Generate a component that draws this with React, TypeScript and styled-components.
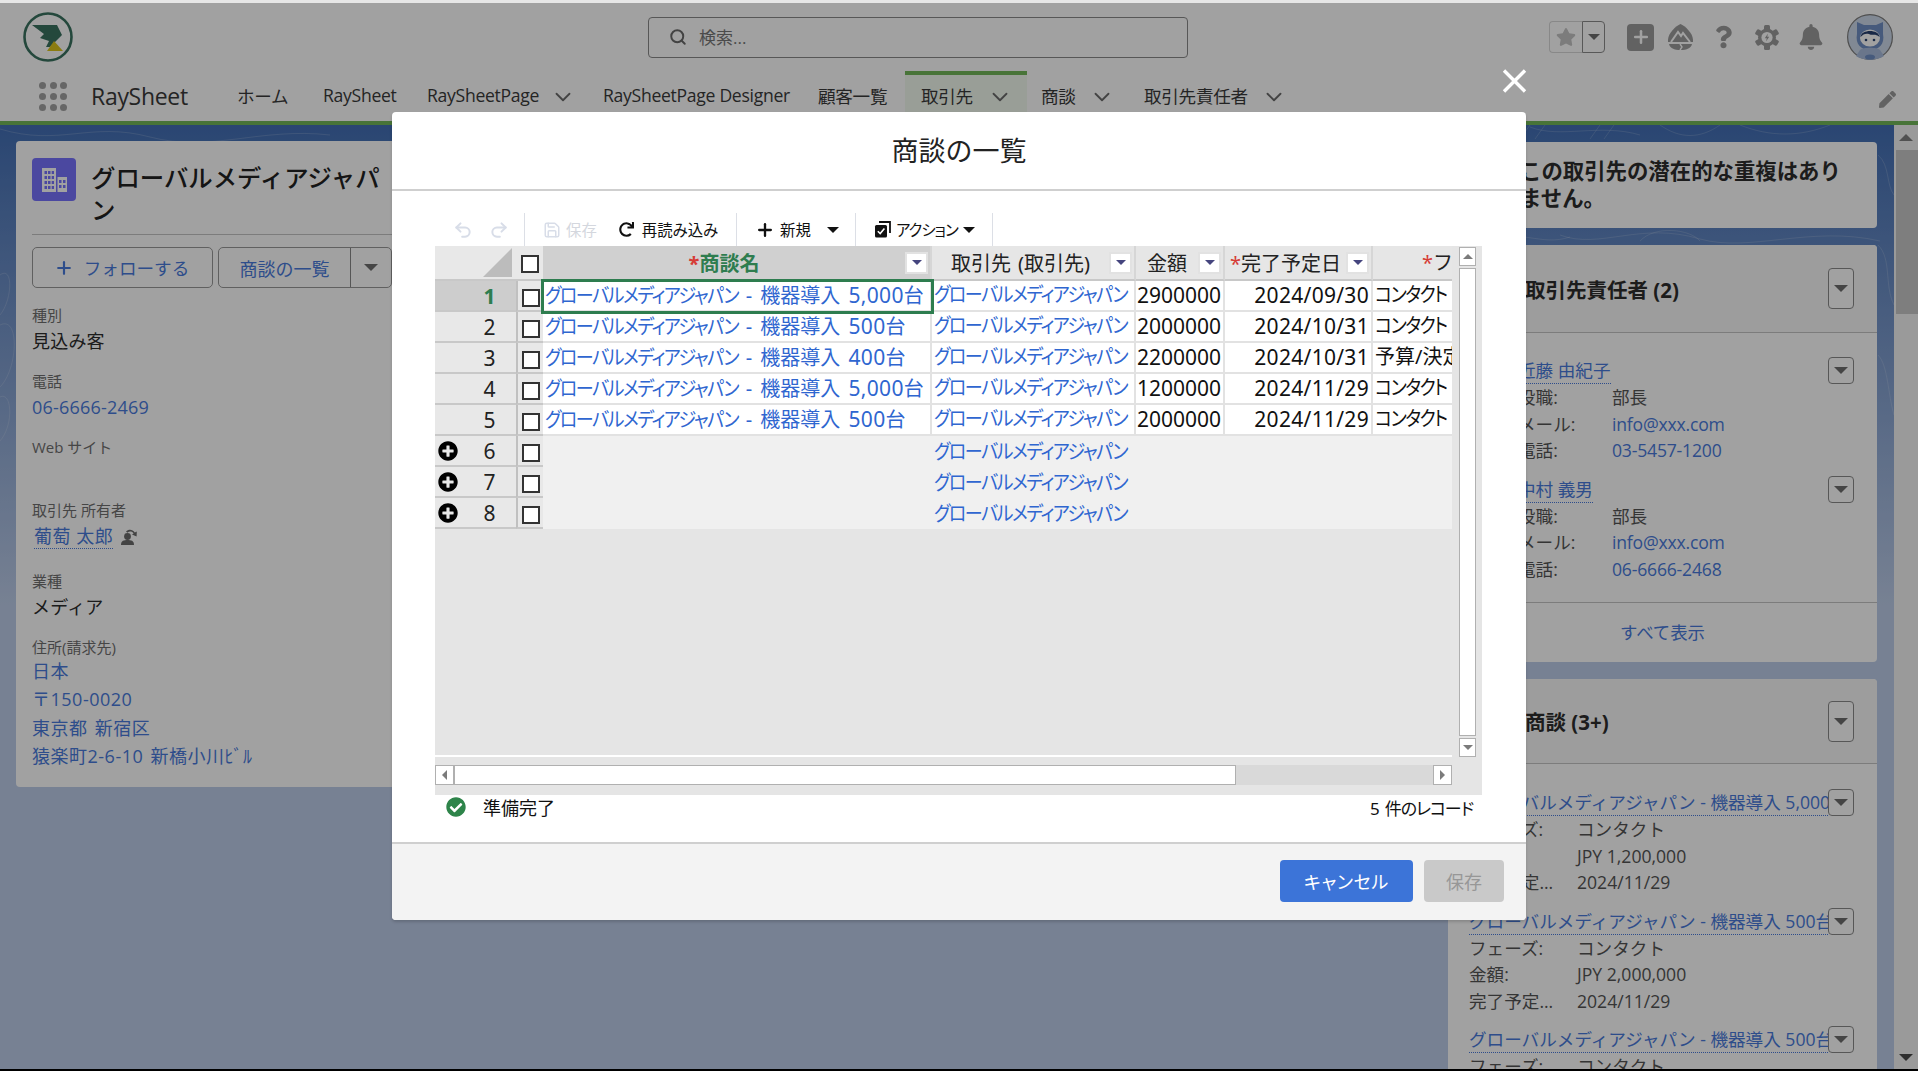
import styled, { createGlobalStyle } from 'styled-components';
import { ChevronDown, Plus, Redo2, Save, Search, Undo2 } from 'lucide-react';
import { FaBell, FaCheckCircle, FaPen, FaPlusCircle, FaQuestion, FaRedo, FaStar } from 'react-icons/fa';

const sans = `"Open Sans", "Noto Sans CJK JP", sans-serif`;
const sheet = `"Noto Sans", "Noto Sans CJK JP", sans-serif`;
const COLUMNS = '81px 27px 389px 204px 89px 148px 80px';

const GlobalStyle = createGlobalStyle`
  html, body { margin: 0; padding: 0; overflow: hidden; }
  body { font-family: ${sans}; color: #2d2d2d; background: #000; }
  * { box-sizing: border-box; }
`;

const Caret = ({ size = 6, color = '#6e6e6e' }: { size?: number; color?: string }) => (
  <CaretShape $size={size} $color={color} />
);

const Logo = () => (
  <svg width="50" height="50" viewBox="0 0 50 50">
    <circle cx="25" cy="25" r="23.5" fill="none" stroke="#3a7260" strokeWidth="2.6" />
    <path d="M9 13 L34 13 L39 23 L27 35 L23 35 L26 29 L17 26 L21 22 Z" fill="#3a7260" />
    <path d="M31 29 L40 39 L24 39 Z" fill="#dcc51c" />
  </svg>
);

const TrailIcon = () => (
  <svg width="25" height="26" viewBox="0 0 25 26">
    <path d="M12.5 0 C17 2 25 9 25 16 L25 18 L0 18 L0 16 C0 9 8 2 12.5 0 Z" fill="#9c9c9c" />
    <path d="M1 20 L24 20 C23 24 19 26 12.5 26 C6 26 2 24 1 20 Z" fill="#9c9c9c" />
    <path d="M3 18 L10 8 L13 12 L15 9 L22 18" fill="none" stroke="#fff" strokeWidth="2" />
    <path d="M12 20 L14 23 L12 26" fill="none" stroke="#fff" strokeWidth="1.4" />
  </svg>
);

const GearIcon = () => (
  <svg width="24" height="25" viewBox="0 0 24 25">
    <g fill="#9c9c9c">
      <circle cx="12" cy="12.5" r="9" />
      <rect x="9" y="0" width="6" height="25" rx="1.5" />
      <rect x="9" y="0" width="6" height="25" rx="1.5" transform="rotate(60 12 12.5)" />
      <rect x="9" y="0" width="6" height="25" rx="1.5" transform="rotate(120 12 12.5)" />
    </g>
    <circle cx="12" cy="12.5" r="5.6" fill="#fff" />
    <path d="M13 8.5 L9.8 13.2 L11.8 13.2 L11 16.5 L14.2 11.8 L12.2 11.8 Z" fill="#9c9c9c" />
  </svg>
);

const Avatar = () => (
  <svg width="46" height="46" viewBox="0 0 46 46">
    <circle cx="23" cy="23" r="22.4" fill="#cdd9ea" stroke="#7d7d7d" strokeWidth="1.2" />
    <path d="M10 8 L17 11 L29 11 L36 8 L36 20 C38 30 32 36 23 36 C14 36 8 30 10 20 Z" fill="#6f8fc4" />
    <path d="M13 36 C16 33 30 33 33 36 L37 42 C30 47 16 47 9 42 Z" fill="#a9bcdc" />
    <ellipse cx="23" cy="24" rx="10" ry="8.6" fill="#fff" />
    <path d="M13.5 23 C14 15 32 15 32.5 23 C28 19 26 22 22 20 C19 19 16 20 13.5 23 Z" fill="#27406f" />
    <circle cx="19" cy="26" r="1.3" fill="#27406f" />
    <circle cx="27" cy="26" r="1.3" fill="#27406f" />
    <ellipse cx="23" cy="43" rx="5" ry="2.6" fill="#6f8fc4" />
  </svg>
);

const BuildingIcon = () => (
  <svg width="26" height="24" viewBox="0 0 26 24" fill="#fff">
    <path d="M1 0 H15 V24 H1 Z M3.5 3 V6 H6 V3 Z M7 3 V6 H9.5 V3 Z M10.7 3 V6 H13 V3 Z M3.5 8 V11 H6 V8 Z M7 8 V11 H9.5 V8 Z M10.7 8 V11 H13 V8 Z M3.5 13 V16 H6 V13 Z M7 13 V16 H9.5 V13 Z M10.7 13 V16 H13 V13 Z M3.5 18 V21 H6 V18 Z M7 18 V21 H9.5 V18 Z M10.7 18 V21 H13 V18 Z" fillRule="evenodd" />
    <path d="M16.5 9 H26 V24 H16.5 Z M18 12 V15 H20.5 V12 Z M22 12 V15 H24.5 V12 Z M18 17 V20 H20.5 V17 Z M22 17 V20 H24.5 V17 Z" fillRule="evenodd" />
  </svg>
);

const OwnerIcon = () => (
  <svg width="17" height="17" viewBox="0 0 17 17" fill="#6a6a6a">
    <circle cx="6.5" cy="8.5" r="3.4" />
    <path d="M0 17 C0 12.5 3 12 6.5 12 C10 12 13 12.5 13 17 Z" />
    <path d="M5 3.6 C7.5 0.8 11.5 1 13.8 4.4 L15.8 3.4 L15.6 8.6 L11 6.4 L12.6 5.4 C11 3.2 8.4 3 6.4 4.8 Z" />
  </svg>
);

const ActionIcon = () => (
  <svg width="17" height="17" viewBox="0 0 17 17">
    <path d="M5 1 H16 V12" fill="none" stroke="#111" strokeWidth="1.8" />
    <rect x="1" y="4" width="12" height="12.5" rx="1.5" fill="#111" />
    <path d="M3.8 10.2 L6.2 12.6 L10.4 7.6" fill="none" stroke="#fff" strokeWidth="1.6" />
  </svg>
);

const CloseIcon = () => (
  <svg width="25" height="24" viewBox="0 0 25 24">
    <path d="M2 1.5 L23 22.5 M23 1.5 L2 22.5" stroke="#fff" strokeWidth="3.4" fill="none" />
  </svg>
);

const Contours = () => (
  <svg width="1894" height="944" viewBox="0 0 1894 944" fill="none" stroke="rgba(255,255,255,0.16)" strokeWidth="1">
    <path d="M0 4 C60 22 90 -4 150 12 C210 28 260 2 330 10" />
    <path d="M0 150 C14 140 12 176 0 190 M0 200 C20 190 18 244 0 262 M0 272 C12 266 14 300 0 316" />
    <path d="M1560 110 C1600 125 1640 96 1700 114 C1750 128 1810 100 1880 116" />
    <path d="M1640 116 C1655 100 1690 104 1700 116 M1490 118 C1520 102 1540 122 1570 112" />
    <path d="M1530 2 C1560 14 1600 -2 1640 10 M1660 0 C1680 14 1700 14 1720 0 M1740 0 C1770 12 1800 12 1830 0" />
    <path d="M1878 30 C1890 40 1886 60 1894 70 M1878 120 C1892 134 1884 160 1894 180 M1878 230 C1888 240 1888 270 1894 290" />
    <path d="M1530 0 L1520 14 M1545 0 L1535 14 M1600 0 L1590 14 M1614 0 L1604 14" />
  </svg>
);

const SHEET_ROWS = [
  { qty: '5,000', amount: '2900000', date: '2024/09/30', phase: 'コンタクト' },
  { qty: '500', amount: '2000000', date: '2024/10/31', phase: 'コンタクト' },
  { qty: '400', amount: '2200000', date: '2024/10/31', phase: '予算/決定' },
  { qty: '5,000', amount: '1200000', date: '2024/11/29', phase: 'コンタクト' },
  { qty: '500', amount: '2000000', date: '2024/11/29', phase: 'コンタクト' },
];

const CONTACTS = [
  { name: '近藤 由紀子', mail: '03-5457-1200' },
  { name: '中村 義男', mail: '06-6666-2468' },
];

const DEALS = [
  { name: 'グローバルメディアジャパン - 機器導入 5,000台', amount: 'JPY 1,200,000', date: '2024/11/29' },
  { name: 'グローバルメディアジャパン - 機器導入 500台', amount: 'JPY 2,000,000', date: '2024/11/29' },
  { name: 'グローバルメディアジャパン - 機器導入 500台', amount: 'JPY 2,000,000', date: '2024/11/29' },
];

const navItems = [
  { label: 'ホーム', width: 86 },
  { label: 'RaySheet', width: 104 },
  { label: 'RaySheetPage', width: 176, chevronGap: 11 },
  { label: 'RaySheetPage Designer', width: 215 },
  { label: '顧客一覧', width: 87 },
  { label: '取引先', width: 122, chevronGap: 14, pad: 16, active: true },
  { label: '商談', width: 117, chevronGap: 13, pad: 14 },
  { label: '取引先責任者', width: 150, chevronGap: 13 },
];

export default function App() {
  return (
    <>
      <GlobalStyle />
      <Root>
        <TopStrip />
        <Shell>
          <TopBar>
            <LogoSlot>
              <Logo />
            </LogoSlot>
            <SearchBox>
              <Search size={18} strokeWidth={2.6} color="#6a6a6a" />
              <span>検索...</span>
            </SearchBox>
            <HeaderActions>
              <FavoriteGroup>
                <FavoriteStar>
                  <FaStar size={20} color="#c4c4c4" />
                </FavoriteStar>
                <FavoriteCaret>
                  <Caret size={6} />
                </FavoriteCaret>
              </FavoriteGroup>
              <AddBox>
                <Plus size={20} strokeWidth={3} color="#fff" />
              </AddBox>
              <HeaderIcon $left={14} $width={25}>
                <TrailIcon />
              </HeaderIcon>
              <HeaderIcon $left={22} $width={17}>
                <FaQuestion size={24} color="#9c9c9c" />
              </HeaderIcon>
              <HeaderIcon $left={23} $width={24}>
                <GearIcon />
              </HeaderIcon>
              <HeaderIcon $left={19} $width={26}>
                <FaBell size={26} color="#9c9c9c" />
              </HeaderIcon>
              <HeaderIcon $left={23} $width={46}>
                <Avatar />
              </HeaderIcon>
            </HeaderActions>
          </TopBar>

          <NavBar>
            <Launcher>
              {Array.from({ length: 9 }).map((_, i) => (
                <Dot key={i} />
              ))}
            </Launcher>
            <AppName>RaySheet</AppName>
            {navItems.map((item) => (
              <NavItem key={item.label} $width={item.width} $pad={item.pad} $active={item.active}>
                <span>{item.label}</span>
                {item.chevronGap && (
                  <NavChevron $gap={item.chevronGap}>
                    <ChevronDown size={26} strokeWidth={1.7} />
                  </NavChevron>
                )}
              </NavItem>
            ))}
            <NavPencil>
              <FaPen size={17} color="#9c9c9c" />
            </NavPencil>
          </NavBar>

          <Body>
            <Main>
              <ContourLayer>
                <Contours />
              </ContourLayer>
              <LeftCard>
                <RecordHead>
                  <RecordIcon>
                    <BuildingIcon />
                  </RecordIcon>
                  <RecordTitle>グローバルメディアジャパン</RecordTitle>
                </RecordHead>
                <ActionRow>
                  <FollowButton>
                    <Plus size={20} strokeWidth={2.6} />
                    <span>フォローする</span>
                  </FollowButton>
                  <SplitButton>
                    <SplitLabel>商談の一覧</SplitLabel>
                    <SplitCaret>
                      <Caret size={7} />
                    </SplitCaret>
                  </SplitButton>
                </ActionRow>
                <Field $after={16}>
                  <FieldLabel>種別</FieldLabel>
                  <FieldValue>見込み客</FieldValue>
                </Field>
                <Field $after={16}>
                  <FieldLabel>電話</FieldLabel>
                  <FieldLink>06-6666-2469</FieldLink>
                </Field>
                <Field $after={17}>
                  <FieldLabel>Web サイト</FieldLabel>
                  <FieldValue />
                </Field>
                <Field $after={21}>
                  <FieldLabel>取引先 所有者</FieldLabel>
                  <OwnerRow>
                    <OwnerLink>葡萄 太郎</OwnerLink>
                    <OwnerIcon />
                  </OwnerRow>
                </Field>
                <Field $after={16}>
                  <FieldLabel>業種</FieldLabel>
                  <FieldValue>メディア</FieldValue>
                </Field>
                <Field $after={0}>
                  <FieldLabel>住所(請求先)</FieldLabel>
                  <AddressLine>日本</AddressLine>
                  <AddressLine>〒150-0020</AddressLine>
                  <AddressLine>東京都 新宿区</AddressLine>
                  <AddressLine>猿楽町2-6-10 新橋小川ﾋﾞﾙ</AddressLine>
                </Field>
              </LeftCard>
              <span />
              <RightColumn>
                <NoticeCard>この取引先の潜在的な重複はありません。</NoticeCard>
                <SideCard>
                  <SideHead $height={88}>
                    <SideTitle>取引先責任者 (2)</SideTitle>
                    <TallMenu>
                      <Caret size={7} />
                    </TallMenu>
                  </SideHead>
                  <SideList $left={70} $top={24} $bottom={8}>
                    {CONTACTS.map((c) => (
                      <RecordItem key={c.name}>
                        <RecordNameRow>
                          <RecordLink>{c.name}</RecordLink>
                          <RowMenu>
                            <Caret size={7} />
                          </RowMenu>
                        </RecordNameRow>
                        <InfoRow $label={94}>
                          <span>役職:</span>
                          <span>部長</span>
                        </InfoRow>
                        <InfoRow $label={94}>
                          <span>メール:</span>
                          <InfoLink>info@xxx.com</InfoLink>
                        </InfoRow>
                        <InfoRow $label={94}>
                          <span>電話:</span>
                          <InfoLink>{c.mail}</InfoLink>
                        </InfoRow>
                      </RecordItem>
                    ))}
                  </SideList>
                  <ShowAll>すべて表示</ShowAll>
                </SideCard>
                <SideCard>
                  <SideHead $height={85}>
                    <SideTitle>商談 (3+)</SideTitle>
                    <TallMenu>
                      <Caret size={7} />
                    </TallMenu>
                  </SideHead>
                  <SideList $left={21} $top={25} $bottom={0}>
                    {DEALS.map((d, i) => (
                      <RecordItem key={i}>
                        <RecordNameRow>
                          <RecordLink>{d.name}</RecordLink>
                          <RowMenu>
                            <Caret size={7} />
                          </RowMenu>
                        </RecordNameRow>
                        <InfoRow $label={108}>
                          <span>フェーズ:</span>
                          <span>コンタクト</span>
                        </InfoRow>
                        <InfoRow $label={108}>
                          <span>金額:</span>
                          <span>{d.amount}</span>
                        </InfoRow>
                        <InfoRow $label={108}>
                          <span>完了予定...</span>
                          <span>{d.date}</span>
                        </InfoRow>
                      </RecordItem>
                    ))}
                  </SideList>
                </SideCard>
              </RightColumn>
            </Main>
            <PageScrollbar>
              <ScrollArrowTop>
                <CaretUp />
              </ScrollArrowTop>
              <ScrollThumb />
              <ScrollArrowBottom>
                <Caret size={7} color="#4a4a4a" />
              </ScrollArrowBottom>
            </PageScrollbar>
          </Body>

          <Backdrop />
          <CloseButton>
            <CloseIcon />
          </CloseButton>

          <Modal>
            <ModalHeader>商談の一覧</ModalHeader>
            <ModalBody>
              <Toolbar>
                <ToolGroup $width={90}>
                  <Undo2 size={20} strokeWidth={2.4} color="#d8dde8" />
                  <Redo2 size={20} strokeWidth={2.4} color="#d8dde8" />
                </ToolGroup>
                <ToolGroup $width={212}>
                  <Save size={18} color="#d8dde8" />
                  <ToolText $disabled>保存</ToolText>
                  <ReloadSlot>
                    <FaRedo size={15} color="#111" />
                  </ReloadSlot>
                  <ToolText>再読み込み</ToolText>
                </ToolGroup>
                <ToolGroup $width={119}>
                  <Plus size={20} strokeWidth={2.8} color="#111" />
                  <ToolText>新規</ToolText>
                  <ToolCaret>
                    <Caret size={6} color="#111" />
                  </ToolCaret>
                </ToolGroup>
                <ToolGroup $width={137}>
                  <ActionIcon />
                  <ActionText>アクション</ActionText>
                  <Caret size={6} color="#111" />
                </ToolGroup>
              </Toolbar>

              <SheetFrame>
                <SheetTop>
                  <SheetTable>
                    <SheetRow $height={35}>
                      <CornerCell>
                        <CornerTriangle />
                      </CornerCell>
                      <HeadCheckCell>
                        <CheckBox />
                      </HeadCheckCell>
                      <ColumnHead $selected>
                        <ColumnLabel $selected>
                          <Required>*</Required>商談名
                        </ColumnLabel>
                        <FilterButton>
                          <Caret size={5} color="#45457e" />
                        </FilterButton>
                      </ColumnHead>
                      <ColumnHead>
                        <ColumnLabel>取引先 (取引先)</ColumnLabel>
                        <FilterButton>
                          <Caret size={5} color="#45457e" />
                        </FilterButton>
                      </ColumnHead>
                      <ColumnHead>
                        <ColumnLabel>金額</ColumnLabel>
                        <FilterButton>
                          <Caret size={5} color="#45457e" />
                        </FilterButton>
                      </ColumnHead>
                      <ColumnHead>
                        <ColumnLabel>
                          <Required>*</Required>完了予定日
                        </ColumnLabel>
                        <FilterButton>
                          <Caret size={5} color="#45457e" />
                        </FilterButton>
                      </ColumnHead>
                      <ClippedHead>
                        <Required>*</Required>フェーズ
                      </ClippedHead>
                    </SheetRow>

                    {SHEET_ROWS.map((r, i) => (
                      <SheetRow key={i} $height={31}>
                        <RowHead $selected={i === 0}>
                          <span />
                          <RowNumber $selected={i === 0}>{i + 1}</RowNumber>
                        </RowHead>
                        <CheckCell>
                          <CheckBox />
                        </CheckCell>
                        <LinkCell $focused={i === 0}>
                          <Kana $trim={22}>グローバルメディアジャパン</Kana> - 機器導入 <Digits>{r.qty}</Digits>台
                        </LinkCell>
                        <LinkCell>
                          <Kana $trim={22}>グローバルメディアジャパン</Kana>
                        </LinkCell>
                        <AmountCell>
                          <Digits>{r.amount}</Digits>
                        </AmountCell>
                        <TextCell $right>
                          <Digits>{r.date}</Digits>
                        </TextCell>
                        <TextCell $last>
                          {r.phase === 'コンタクト' ? <Kana $trim={10}>{r.phase}</Kana> : r.phase}
                        </TextCell>
                      </SheetRow>
                    ))}

                    {[6, 7, 8].map((n) => (
                      <SheetRow key={n} $height={31}>
                        <RowHead>
                          <AddRowIcon>
                            <FaPlusCircle size={20} color="#000" />
                          </AddRowIcon>
                          <RowNumber>{n}</RowNumber>
                        </RowHead>
                        <CheckCell>
                          <CheckBox />
                        </CheckCell>
                        <EmptyCell />
                        <NewLinkCell>
                          <Kana $trim={22}>グローバルメディアジャパン</Kana>
                        </NewLinkCell>
                        <EmptyCell />
                        <EmptyCell />
                        <EmptyCell />
                      </SheetRow>
                    ))}
                  </SheetTable>
                  <VScrollbar>
                    <ScrollButton>
                      <CaretUp $small />
                    </ScrollButton>
                    <VThumb />
                    <ScrollButton>
                      <Caret size={5} color="#7b7b7b" />
                    </ScrollButton>
                  </VScrollbar>
                </SheetTop>
                <HScrollbar>
                  <HButton>
                    <CaretSide $dir="left" />
                  </HButton>
                  <HThumb />
                  <HButton>
                    <CaretSide $dir="right" />
                  </HButton>
                </HScrollbar>
              </SheetFrame>

              <StatusRow>
                <StatusLeft>
                  <FaCheckCircle size={20} color="#2e844a" />
                  <span>準備完了</span>
                </StatusLeft>
                <RecordCount>5 件のレコード</RecordCount>
              </StatusRow>
            </ModalBody>
            <ModalFooter>
              <PrimaryButton>キャンセル</PrimaryButton>
              <DisabledButton>保存</DisabledButton>
            </ModalFooter>
          </Modal>
        </Shell>
        <BottomStrip />
      </Root>
    </>
  );
}

const Root = styled.div`
  width: 1918px;
  height: 1071px;
  display: flex;
  flex-direction: column;
  overflow: hidden;
  background: #000;
`;

const TopStrip = styled.div`
  height: 3px;
  flex: none;
  background: #e6e6e6;
`;

const BottomStrip = styled.div`
  height: 2px;
  flex: none;
  background: #000;
`;

const Shell = styled.div`
  position: relative;
  flex: 1;
  min-height: 0;
  display: flex;
  flex-direction: column;
  background: #fff;
  overflow: hidden;
`;

const TopBar = styled.header`
  height: 68px;
  flex: none;
  display: flex;
  align-items: center;
  padding-right: 25px;
`;

const LogoSlot = styled.div`
  width: 50px;
  height: 50px;
  margin-left: 23px;
`;

const SearchBox = styled.div`
  width: 540px;
  height: 41px;
  margin-left: 575px;
  display: flex;
  align-items: center;
  gap: 12px;
  padding-left: 20px;
  padding-bottom: 1px;
  border: 1px solid #8a8a8a;
  border-radius: 4px;
  font-size: 17px;
  color: #777;
`;

const HeaderActions = styled.div`
  margin-left: auto;
  display: flex;
  align-items: center;
`;

const FavoriteGroup = styled.div`
  display: flex;
  width: 56px;
  height: 32px;
`;

const FavoriteStar = styled.div`
  width: 33px;
  display: flex;
  align-items: center;
  justify-content: center;
  border: 1px solid #d8d8d8;
  border-right: none;
  border-radius: 4px 0 0 4px;
`;

const FavoriteCaret = styled.div`
  width: 23px;
  display: flex;
  align-items: center;
  justify-content: center;
  border: 1px solid #8c8c8c;
  border-radius: 0 4px 4px 0;
`;

const AddBox = styled.div`
  width: 27px;
  height: 27px;
  margin-left: 22px;
  display: flex;
  align-items: center;
  justify-content: center;
  border-radius: 4px;
  background: #9c9c9c;
`;

const HeaderIcon = styled.div<{ $left: number; $width: number }>`
  width: ${(p) => p.$width}px;
  margin-left: ${(p) => p.$left}px;
  display: flex;
  align-items: center;
  justify-content: center;
`;

const NavBar = styled.nav`
  height: 54px;
  flex: none;
  display: flex;
  align-items: stretch;
  padding-left: 39px;
  border-bottom: 4px solid #72b85a;
`;

const Launcher = styled.div`
  width: 28px;
  height: 29px;
  align-self: center;
  display: grid;
  grid-template-columns: repeat(3, 7px);
  grid-template-rows: repeat(3, 7px);
  justify-content: space-between;
  align-content: space-between;
`;

const Dot = styled.span`
  border-radius: 50%;
  background: #a2a2a2;
`;

const AppName = styled.div`
  width: 146px;
  margin-left: 24px;
  font-size: 23px;
  line-height: 50px;
  letter-spacing: -0.3px;
  color: #3a3a3a;
`;

const NavItem = styled.div<{ $width: number; $pad?: number; $active?: boolean }>`
  width: ${(p) => p.$width}px;
  display: flex;
  align-items: center;
  font-size: 17.6px;
  letter-spacing: -0.3px;
  color: #3a3a3a;
  padding-left: ${(p) => p.$pad ?? 0}px;
  padding-bottom: 6px;
  border-top: 4px solid ${(p) => (p.$active ? '#72b85a' : 'transparent')};
  background: ${(p) => (p.$active ? '#f3fbf0' : 'transparent')};
`;

const NavChevron = styled.span<{ $gap: number }>`
  margin-left: ${(p) => p.$gap}px;
  margin-top: 4px;
  display: flex;
  color: #6a6a6a;
`;

const NavPencil = styled.div`
  margin-left: auto;
  padding: 6px 22px 0 0;
  display: flex;
  align-items: center;
`;

const Body = styled.div`
  flex: 1;
  min-height: 0;
  display: flex;
  overflow: hidden;
`;

const Main = styled.main`
  position: relative;
  flex: 1;
  display: grid;
  grid-template-columns: 395px 1fr 429px;
  align-items: start;
  padding: 16px 17px 0 16px;
  background: linear-gradient(#436fb5 0, #bdcde9 480px);
`;

const ContourLayer = styled.div`
  position: absolute;
  inset: 0;
  pointer-events: none;
`;

const LeftCard = styled.section`
  position: relative;
  display: flex;
  flex-direction: column;
  height: 646px;
  padding: 17px 0 0 16px;
  border-radius: 4px;
  background: #fff;
`;

const RecordHead = styled.div`
  display: flex;
  gap: 16px;
  height: 77px;
  border-bottom: 1px solid #c4c4c4;
`;

const RecordIcon = styled.div`
  width: 44px;
  height: 43px;
  flex: none;
  display: flex;
  align-items: center;
  justify-content: center;
  border-radius: 4px;
  background: #7772fe;
`;

const RecordTitle = styled.h1`
  margin: 4px 0 0 -1px;
  width: 304px;
  font-size: 24.4px;
  font-weight: 500;
  line-height: 32px;
  color: #222;
  word-break: break-all;
`;

const ActionRow = styled.div`
  display: flex;
  gap: 5px;
  margin-top: 12px;
  margin-bottom: 17px;
`;

const FollowButton = styled.div`
  width: 181px;
  height: 41px;
  display: flex;
  align-items: center;
  justify-content: center;
  gap: 10px;
  padding-right: 2px;
  border: 1px solid #999;
  border-radius: 5px;
  font-size: 17.6px;
  color: #4a7bdc;
`;

const SplitButton = styled.div`
  width: 174px;
  height: 41px;
  display: flex;
  border: 1px solid #999;
  border-radius: 5px;
  font-size: 18px;
  color: #4a7bdc;
`;

const SplitLabel = styled.div`
  width: 132px;
  display: flex;
  align-items: center;
  justify-content: center;
  border-right: 1px solid #888;
`;

const SplitCaret = styled.div`
  flex: 1;
  display: flex;
  align-items: center;
  justify-content: center;
`;

const Field = styled.div<{ $after: number }>`
  margin-bottom: ${(p) => p.$after}px;
`;

const FieldLabel = styled.div`
  height: 20px;
  font-size: 15px;
  line-height: 20px;
  color: #6f6f6f;
`;

const FieldValue = styled.div`
  min-height: 23px;
  margin-top: 3px;
  font-size: 18px;
  line-height: 27px;
  letter-spacing: 0.2px;
  color: #2d2d2d;
`;

const FieldLink = styled(FieldValue)`
  color: #4a7bdc;
`;

const OwnerRow = styled.div`
  display: flex;
  align-items: center;
  gap: 8px;
  margin-top: 3px;
  padding-left: 2px;
  height: 27px;
`;

const OwnerLink = styled.span`
  font-size: 18px;
  line-height: 24px;
  letter-spacing: 0.5px;
  color: #4a7bdc;
  border-bottom: 1px dotted #4a7bdc;
`;

const AddressLine = styled.div`
  font-size: 18px;
  line-height: 28.3px;
  letter-spacing: 0.5px;
  word-spacing: 2px;
  color: #4a7bdc;
`;

const RightColumn = styled.div`
  position: relative;
  display: flex;
  flex-direction: column;
  gap: 17px;
  margin-top: 1px;
`;

const NoticeCard = styled.section`
  height: 86px;
  padding: 15px 34px 0 72px;
  border-radius: 4px;
  background: #fff;
  font-size: 21.4px;
  font-weight: 700;
  line-height: 27px;
  color: #2d2d2d;
`;

const SideCard = styled.section`
  border-radius: 4px;
  background: #fff;
  overflow: hidden;
`;

const SideHead = styled.div<{ $height: number }>`
  height: ${(p) => p.$height}px;
  display: flex;
  align-items: center;
  justify-content: space-between;
  padding: 0 23px 0 77px;
  background: #f9f9f9;
  border-bottom: 1px solid #c4c4c4;
`;

const SideTitle = styled.h2`
  margin: 0;
  font-size: 20.5px;
  font-weight: 700;
  color: #2d2d2d;
`;

const MenuBase = styled.div`
  width: 26px;
  flex: none;
  display: flex;
  align-items: center;
  justify-content: center;
  border: 1px solid #8a8a8a;
  border-radius: 4px;
  background: #fff;
`;

const TallMenu = styled(MenuBase)`
  height: 41px;
`;

const RowMenu = styled(MenuBase)`
  height: 27px;
  margin-left: auto;
`;

const SideList = styled.div<{ $left: number; $top: number; $bottom: number }>`
  padding: ${(p) => p.$top}px 23px ${(p) => p.$bottom}px ${(p) => p.$left}px;
`;

const RecordItem = styled.div`
  height: 118.5px;
  font-size: 17.6px;
`;

const RecordNameRow = styled.div`
  display: flex;
  align-items: center;
  height: 27px;
`;

const RecordLink = styled.a`
  flex: 0 1 auto;
  min-width: 0;
  align-self: flex-start;
  white-space: nowrap;
  overflow: hidden;
  line-height: 26px;
  color: #4a7bdc;
  border-bottom: 1px dotted #4a7bdc;
`;

const InfoRow = styled.div<{ $label: number }>`
  display: grid;
  grid-template-columns: ${(p) => p.$label}px 1fr;
  height: 26.5px;
  line-height: 26.5px;
  color: #555;
  white-space: nowrap;
`;

const InfoLink = styled.span`
  letter-spacing: -0.2px;
  color: #4a7bdc;
`;

const ShowAll = styled.div`
  height: 60px;
  display: flex;
  align-items: center;
  justify-content: center;
  padding-bottom: 2px;
  border-top: 1px solid #c4c4c4;
  font-size: 17.4px;
  color: #4a7bdc;
`;

const PageScrollbar = styled.aside`
  position: relative;
  width: 24px;
  flex: none;
  padding: 25px 0 0 2px;
  background: #f4f4f4;
`;

const ScrollThumb = styled.div`
  height: 164px;
  background: #c8c8c8;
`;

const ScrollArrowTop = styled.div`
  position: absolute;
  top: 9px;
  left: 5px;
  display: flex;
`;

const ScrollArrowBottom = styled.div`
  position: absolute;
  bottom: 8px;
  left: 5px;
  display: flex;
`;

const CaretShape = styled.span<{ $size: number; $color: string }>`
  display: inline-block;
  width: 0;
  height: 0;
  border-left: ${(p) => p.$size}px solid transparent;
  border-right: ${(p) => p.$size}px solid transparent;
  border-top: ${(p) => p.$size}px solid ${(p) => p.$color};
`;

const CaretUp = styled.span<{ $small?: boolean }>`
  display: inline-block;
  width: 0;
  height: 0;
  border-left: ${(p) => (p.$small ? 5 : 7)}px solid transparent;
  border-right: ${(p) => (p.$small ? 5 : 7)}px solid transparent;
  border-bottom: ${(p) => (p.$small ? 5 : 7)}px solid ${(p) => (p.$small ? '#7b7b7b' : '#808080')};
`;

const CaretSide = styled.span<{ $dir: 'left' | 'right' }>`
  display: inline-block;
  width: 0;
  height: 0;
  border-top: 5px solid transparent;
  border-bottom: 5px solid transparent;
  ${(p) => (p.$dir === 'left' ? 'border-right: 5px solid #7b7b7b;' : 'border-left: 5px solid #7b7b7b;')}
`;

const Backdrop = styled.div`
  position: absolute;
  inset: 0;
  background: rgba(0, 0, 0, 0.37);
`;

const CloseButton = styled.div`
  position: absolute;
  left: 1502px;
  top: 66px;
  display: flex;
`;

const Modal = styled.div`
  position: absolute;
  left: 392px;
  top: 109px;
  width: 1134px;
  height: 808px;
  display: flex;
  flex-direction: column;
  border-radius: 4px;
  background: #fff;
  box-shadow: 0 2px 3px rgba(0, 0, 0, 0.16);
  overflow: hidden;
  color: #111;
`;

const ModalHeader = styled.h2`
  height: 79px;
  flex: none;
  margin: 0;
  padding-bottom: 2px;
  display: flex;
  align-items: center;
  justify-content: center;
  border-bottom: 2px solid #cfcfcf;
  font-size: 27px;
  font-weight: 400;
  color: #222;
`;

const ModalBody = styled.div`
  flex: 1;
  min-height: 0;
  padding: 22px 43px 0;
  font-family: ${sheet};
`;

const Toolbar = styled.div`
  height: 33px;
  display: flex;
  align-items: stretch;
`;

const ToolGroup = styled.div<{ $width: number }>`
  width: ${(p) => p.$width}px;
  display: flex;
  align-items: center;
  gap: 5px;
  padding-left: 18px;
  border-right: 1px solid #dcdfe6;
  &:first-child {
    gap: 16px;
  }
`;

const ToolText = styled.span<{ $disabled?: boolean }>`
  font-size: 15.4px;
  font-feature-settings: 'palt';
  color: ${(p) => (p.$disabled ? '#d4d7de' : '#111')};
`;

const ActionText = styled(ToolText)`
  letter-spacing: -1px;
  margin-right: 0;
`;

const ReloadSlot = styled.span`
  display: flex;
  margin-left: 17px;
  margin-right: 3px;
`;

const ToolCaret = styled.span`
  display: flex;
  margin-left: 11px;
`;

const SheetFrame = styled.div`
  width: 1047px;
  height: 549px;
  background: #e5e5e5;
`;

const SheetTop = styled.div`
  display: flex;
  height: 511px;
`;

const SheetTable = styled.div`
  width: 1017px;
  height: 511px;
  border-bottom: 2px solid #fff;
  overflow: hidden;
`;

const SheetRow = styled.div<{ $height: number }>`
  display: grid;
  grid-template-columns: ${COLUMNS};
  height: ${(p) => p.$height}px;
  font-size: 20px;
  white-space: nowrap;
`;

const CornerCell = styled.div`
  display: flex;
  justify-content: flex-end;
  align-items: center;
  padding-right: 4px;
  background: #e8e8e8;
  border-bottom: 2px solid #c8c8c8;
`;

const CornerTriangle = styled.span`
  width: 0;
  height: 0;
  border-left: 29px solid transparent;
  border-bottom: 29px solid #bcbcbc;
`;

const HeadCheckCell = styled.div`
  display: flex;
  align-items: center;
  justify-content: center;
  padding-top: 3px;
  background: #e8e8e8;
  border-bottom: 2px solid #c8c8c8;
`;

const CheckBox = styled.span`
  width: 18px;
  height: 18px;
  border: 2px solid #333;
  background: #fff;
`;

const ColumnHead = styled.div<{ $selected?: boolean }>`
  display: flex;
  align-items: center;
  padding-right: 2px;
  background: ${(p) => (p.$selected ? '#d0d0d0' : '#e6e6e6')};
  border-right: 2px solid #d6d6d6;
  border-bottom: 2px solid #c8c8c8;
  overflow: hidden;
`;

const ColumnLabel = styled.div<{ $selected?: boolean }>`
  flex: 1;
  text-align: center;
  font-weight: ${(p) => (p.$selected ? 700 : 400)};
  color: ${(p) => (p.$selected ? '#2e7d4f' : '#222')};
  font-size: 20px;
  word-spacing: 2px;
`;

const ClippedHead = styled.div`
  padding-left: 49px;
  line-height: 33px;
  background: #e6e6e6;
  border-bottom: 2px solid #c8c8c8;
  overflow: hidden;
  color: #222;
`;

const Required = styled.span`
  color: #d63c36;
`;

const FilterButton = styled.div`
  width: 23px;
  height: 22px;
  flex: none;
  display: flex;
  align-items: center;
  justify-content: center;
  background: #fff;
  border: 2px solid #e2e2e2;
`;

const RowHead = styled.div<{ $selected?: boolean }>`
  display: grid;
  grid-template-columns: 26px 1fr;
  align-items: center;
  background: ${(p) => (p.$selected ? '#cdcdcd' : '#e8e8e8')};
  border-bottom: 2px solid #c8c8c8;
`;

const AddRowIcon = styled.span`
  display: flex;
  justify-content: center;
`;

const RowNumber = styled.span<{ $selected?: boolean }>`
  text-align: center;
  padding-left: 2px;
  font-size: 21px;
  line-height: 26px;
  font-weight: ${(p) => (p.$selected ? 700 : 400)};
  color: ${(p) => (p.$selected ? '#2e7d4f' : '#222')};
`;

const CheckCell = styled.div`
  display: flex;
  align-items: flex-end;
  justify-content: center;
  padding-bottom: 3px;
  background: #e8e8e8;
  border-left: 2px solid #c0c0c0;
  border-bottom: 2px solid #c8c8c8;
`;

const LinkCell = styled.div<{ $focused?: boolean }>`
  position: relative;
  padding-left: 2px;
  line-height: 28px;
  word-spacing: 3px;
  background: #fff;
  color: #2f66d0;
  overflow: hidden;
  border-right: 2px solid #e2e2e2;
  border-bottom: 2px solid #e2e2e2;
  ${(p) =>
    p.$focused &&
    `
    overflow: visible;
    outline: 3px solid #2e7d4f;
    outline-offset: -1px;
    z-index: 1;
  `}
`;

const NewLinkCell = styled.div`
  padding-left: 2px;
  line-height: 31px;
  background: #f0f0f0;
  color: #2f66d0;
  overflow: hidden;
`;

const TextCell = styled.div<{ $right?: boolean; $last?: boolean }>`
  padding: 0 2px 0 ${(p) => (p.$last ? 2 : 2)}px;
  line-height: 28px;
  background: #fff;
  color: #111;
  overflow: hidden;
  text-align: ${(p) => (p.$right ? 'right' : 'left')};
  border-right: ${(p) => (p.$last ? 'none' : '2px solid #e2e2e2')};
  border-bottom: 2px solid #e2e2e2;
`;

const AmountCell = styled(TextCell)`
  padding-left: 1px;
  letter-spacing: -0.3px;
  & > span {
    letter-spacing: 0;
  }
`;

const EmptyCell = styled.div`
  background: #f0f0f0;
`;

const Kana = styled.span<{ $trim: number }>`
  display: inline-block;
  margin-right: -${(p) => p.$trim}px;
  font-feature-settings: 'palt';
  letter-spacing: -1.6px;
  transform: scaleX(0.9);
  transform-origin: left center;
`;

const Digits = styled.span`
  font-size: 21px;
  letter-spacing: 0.3px;
`;

const VScrollbar = styled.div`
  width: 17px;
  margin-left: 7px;
  margin-top: 1px;
  display: flex;
  flex-direction: column;
  gap: 2px;
`;

const ScrollButton = styled.div`
  height: 19px;
  flex: none;
  display: flex;
  align-items: center;
  justify-content: center;
  background: #fff;
  border: 1px solid #b0b0b0;
`;

const VThumb = styled.div`
  flex: 1;
  background: #fff;
  border: 1px solid #b0b0b0;
`;

const HScrollbar = styled.div`
  width: 1017px;
  height: 20px;
  margin-top: 8px;
  display: flex;
  background: #d9d9d9;
`;

const HButton = styled.div`
  width: 19px;
  flex: none;
  display: flex;
  align-items: center;
  justify-content: center;
  background: #fff;
  border: 1px solid #b0b0b0;
  &:last-child {
    margin-left: auto;
  }
`;

const HThumb = styled.div`
  width: 782px;
  background: #fff;
  border: 1px solid #b0b0b0;
`;

const StatusRow = styled.div`
  width: 1038px;
  height: 24px;
  padding-left: 11px;
  display: flex;
  align-items: center;
  justify-content: space-between;
  font-size: 18px;
  font-feature-settings: 'palt';
  color: #111;
`;

const StatusLeft = styled.div`
  display: flex;
  align-items: center;
  gap: 17px;
`;

const RecordCount = styled.span`
  font-size: 17px;
  letter-spacing: -1.1px;
  word-spacing: 3px;
`;

const ModalFooter = styled.footer`
  height: 78px;
  flex: none;
  display: flex;
  align-items: flex-start;
  justify-content: flex-end;
  gap: 11px;
  padding: 16px 22px 0 0;
  background: #f3f3f3;
  border-top: 2px solid #cfcfcf;
  font-family: ${sheet};
`;

const FooterButton = styled.div`
  height: 42px;
  display: flex;
  align-items: center;
  justify-content: center;
  border-radius: 4px;
  font-size: 18px;
  font-feature-settings: 'palt';
`;

const PrimaryButton = styled(FooterButton)`
  width: 133px;
  letter-spacing: 0.7px;
  background: #3c74d8;
  color: #fff;
`;

const DisabledButton = styled(FooterButton)`
  width: 80px;
  background: #c9c9c9;
  color: #979797;
`;
